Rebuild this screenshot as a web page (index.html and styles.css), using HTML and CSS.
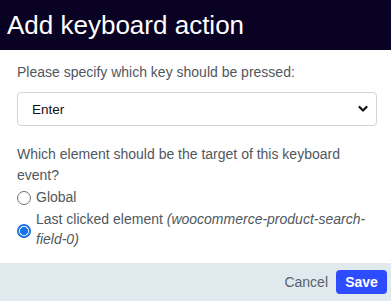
FILE: index.html
```html
<!DOCTYPE html>
<html>
<head>
<meta charset="utf-8">
<link rel="stylesheet" href="styles.css">
</head>
<body>
<div class="dialog">
  <div class="header">Add keyboard action</div>
  <div class="content">
    <div class="label">Please specify which key should be pressed:</div>
    <div class="select">
      <span class="select-value">Enter</span>
      <svg class="chev" width="10" height="8" viewBox="0 0 10 8"><path d="M1.5 2 L5 5.5 L8.5 2" fill="none" stroke="#111" stroke-width="2.2" stroke-linecap="round" stroke-linejoin="round"/></svg>
    </div>
    <div class="question">Which element should be the target of this keyboard event?</div>
    <label class="option first">
      <span class="radio"></span>
      <span class="opt-text">Global</span>
    </label>
    <label class="option second">
      <span class="radio checked"></span>
      <span class="opt-text">Last clicked element <em>(woocommerce-product-search-field-0)</em></span>
    </label>
  </div>
  <div class="footer">
    <span class="cancel">Cancel</span>
    <span class="save">Save</span>
  </div>
</div>
</body>
</html>
```
FILE: styles.css
```css
html, body {
  margin: 0;
  padding: 0;
  background: #ffffff;
}
.dialog {
  width: 391px;
  height: 301px;
  display: flex;
  flex-direction: column;
  font-family: "Liberation Sans", Arial, sans-serif;
  overflow: hidden;
}
.header {
  height: 50px;
  background: #0a0223;
  color: #ffffff;
  font-size: 26px;
  line-height: 50px;
  padding-left: 7px;
  box-sizing: border-box;
}
.content {
  flex: 1;
  padding: 12px 14px 0 17px;
  color: #50575e;
  font-size: 14px;
  line-height: 21px;
}
.label {
  height: 21px;
  margin-bottom: 9px;
}
.select {
  height: 34px;
  box-sizing: border-box;
  border: 1px solid #cdd3d9;
  border-radius: 4px;
  display: flex;
  align-items: center;
  justify-content: space-between;
  padding: 0 8px 0 14px;
  color: #111111;
  font-size: 13.5px;
  margin-bottom: 18px;
}
.chev {
  display: block;
}
.question {
  padding-right: 20px;
}
.option {
  display: flex;
  align-items: center;
  gap: 5px;
}
.option.first {
  height: 22px;
}
.option.second {
  margin-top: 1px;
}
.radio {
  flex: none;
  width: 14px;
  height: 14px;
  box-sizing: border-box;
  border: 1px solid #707070;
  border-radius: 50%;
  margin-top: 1px;
}
.radio.checked {
  border: 2px solid #1a73e8;
  background: radial-gradient(circle, #1a73e8 0 3.8px, #ffffff 4.3px);
  margin-top: 4px;
}
.opt-text {
  line-height: 20px;
}
.opt-text em {
  font-style: italic;
}
.footer {
  height: 38px;
  background: #dfe9ee;
  display: flex;
  align-items: center;
  justify-content: flex-end;
  gap: 8px;
  padding-right: 4px;
  box-sizing: border-box;
}
.cancel {
  color: #5b6168;
  font-size: 14px;
}
.save {
  background: #2d4bff;
  color: #ffffff;
  font-weight: bold;
  font-size: 14px;
  height: 24px;
  line-height: 24px;
  width: 51px;
  text-align: center;
  border-radius: 4px;
}
```
